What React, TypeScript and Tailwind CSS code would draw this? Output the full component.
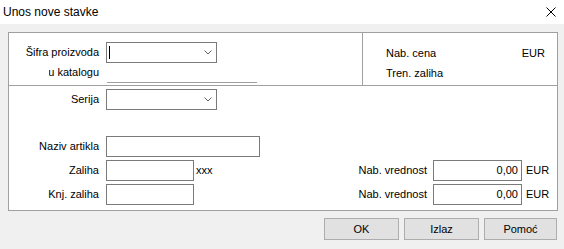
const font = { fontFamily: '"Liberation Sans", Arial, sans-serif' };

function Chevron() {
  return (
    <svg width="8" height="5" viewBox="0 0 8 5" className="shrink-0">
      <polyline points="0.5,0.5 4,4 7.5,0.5" fill="none" stroke="#606060" strokeWidth="1" />
    </svg>
  );
}

function Combo({ cursor }: { cursor?: boolean }) {
  return (
    <div className="w-[111px] h-[21px] border border-[#7a7a7a] bg-white flex items-center pl-[2px] pr-[4px]">
      {cursor ? <div className="w-px h-[13px] bg-black" /> : null}
      <div className="flex-1" />
      <Chevron />
    </div>
  );
}

function Label({ children }: { children: string }) {
  return <div className="w-[90px] text-right shrink-0 mr-[7px]">{children}</div>;
}

function Box({ w, value }: { w: string; value?: string }) {
  return (
    <div className={`${w} h-[21px] border border-[#7a7a7a] bg-white flex items-center justify-end pr-[3px]`}>
      {value}
    </div>
  );
}

export default function App() {
  return (
    <div className="w-[564px] h-[249px] bg-[#f0f0f0] text-[11px] text-black overflow-hidden" style={font}>
      {/* title bar */}
      <div className="h-[24px] bg-white flex items-center justify-between pl-[3px] pr-[8px]">
        <span className="text-[12px]">Unos nove stavke</span>
        <svg width="10" height="10" viewBox="0 0 10 10">
          <path d="M0.5 0.5 L9.5 9.5 M9.5 0.5 L0.5 9.5" stroke="#000" strokeWidth="1" />
        </svg>
      </div>

      <div className="pt-[8px] pl-[8px]">
        <div className="w-[550px] border border-[#a0a0a0] bg-white">
          {/* top section */}
          <div className="h-[53px] flex border-b border-[#a0a0a0]">
            <div className="w-[354px] border-r border-[#a0a0a0] pt-[9px]">
              <div className="flex items-center">
                <Label>Šifra proizvoda</Label>
                <Combo cursor />
              </div>
              <div className="flex items-end mt-[1px]">
                {/* label is clipped by its box, as in the original form */}
                <div className="ml-[40px] w-[50px] mr-[8px] overflow-hidden flex justify-end pb-[2px]">
                  <span className="whitespace-nowrap">Šifra u katalogu</span>
                </div>
                <div className="w-[150px] h-[18px] border-b border-[#a0a0a0]" />
              </div>
            </div>
            <div className="flex-1 pt-[10px] pl-[23px] pr-[12px]">
              <div className="h-[20px] flex items-center justify-between">
                <span>Nab. cena</span>
                <span>EUR</span>
              </div>
              <div className="h-[20px] flex items-center">
                <span>Tren. zaliha</span>
              </div>
            </div>
          </div>

          {/* bottom section */}
          <div className="h-[124px] pt-[3px]">
            <div className="flex items-center">
              <Label>Serija</Label>
              <Combo />
            </div>
            <div className="flex items-center mt-[26px]">
              <Label>Naziv artikla</Label>
              <Box w="w-[154px]" />
            </div>
            <div className="flex items-center mt-[3px]">
              <div className="w-[341px] flex items-center">
                <Label>Zaliha</Label>
                <Box w="w-[88px]" />
                <span className="ml-[2px]">xxx</span>
              </div>
              <div className="w-[77px] text-right mr-[6px]">Nab. vrednost</div>
              <Box w="w-[89px]" value="0,00" />
              <span className="ml-[4px]">EUR</span>
            </div>
            <div className="flex items-center mt-[3px]">
              <div className="w-[341px] flex items-center">
                <Label>Knj. zaliha</Label>
                <Box w="w-[88px]" />
              </div>
              <div className="w-[77px] text-right mr-[6px]">Nab. vrednost</div>
              <Box w="w-[89px]" value="0,00" />
              <span className="ml-[4px]">EUR</span>
            </div>
          </div>
        </div>
      </div>

      {/* buttons */}
      <div className="flex justify-end gap-[5px] pr-[7px] mt-[7px]">
        <button className="w-[75px] h-[22px] bg-[#e1e1e1] border border-[#adadad]">OK</button>
        <button className="w-[75px] h-[22px] bg-[#e1e1e1] border border-[#adadad]">Izlaz</button>
        <button className="w-[73px] h-[22px] bg-[#e1e1e1] border border-[#adadad]">Pomoć</button>
      </div>
    </div>
  );
}
